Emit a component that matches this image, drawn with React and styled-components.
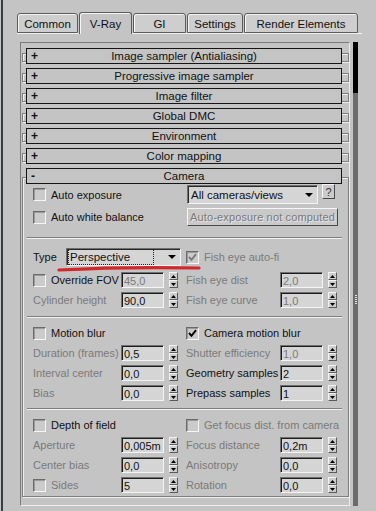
import React from 'react';
import styled, { createGlobalStyle } from 'styled-components';

const BG = '#c4c4c4';
const DIM = '#7a7a7a';
const FIELD = '#d5d5d5';

const GlobalStyle = createGlobalStyle`
  html, body { margin: 0; padding: 0; background: ${BG}; }
  body { font-family: "Liberation Sans", Arial, sans-serif; font-size: 11px; color: #111; }
  * { box-sizing: border-box; }
`;

const Window = styled.div`
  position: relative;
  width: 375px;
  height: 511px;
  margin-left: 1px;
  border-left: 2px solid #363b4a;
  background: ${BG};
  overflow: hidden;
  display: flex;
  flex-direction: column;
`;

const TabBar = styled.div`
  display: flex;
  align-items: flex-end;
  gap: 1px;
  margin: 12px 0 0 14px;
  width: 345px;
  height: 22px;
  border-bottom: 1px solid #f0f0f0;
`;

const Tab = styled.div`
  position: relative;
  z-index: 1;
  width: ${p => p.$w}px;
  height: ${p => (p.$active ? 22 : 20)}px;
  margin-bottom: ${p => (p.$active ? -1 : 0)}px;
  display: flex;
  align-items: center;
  justify-content: center;
  padding-top: 1px;
  background: ${p => (p.$active ? BG : '#cecece')};
  border: 1px solid #5c5c5c;
  border-bottom: ${p => (p.$active ? 'none' : '1px solid #5c5c5c')};
  border-radius: 3px 3px 0 0;
  box-shadow: inset 1px 1px 0 #f6f6f6;
  white-space: nowrap;
  font-size: 11.5px;
`;

const Main = styled.div`
  display: flex;
  margin: 8px 0 0 17px;
`;

const Panel = styled.div`
  width: 330px;
  height: 464px;
  border: 1px solid;
  border-color: #7c7c7c #ececec #ececec #7c7c7c;
  padding: 5px 0 0 1px;
  display: flex;
  flex-direction: column;
  gap: 4px;
`;

const Scrollbar = styled.div`
  margin-left: 3px;
  width: 5px;
  height: 464px;
  display: flex;
  flex-direction: column;
`;

const Thumb = styled.div`
  height: 51px;
  background: #000;
`;

const Track = styled.div`
  flex: 1;
  background: #6b6b6b;
  display: flex;
  align-items: center;
  justify-content: center;
`;

const Grip = styled.div`
  width: 2px;
  height: 10px;
  background: repeating-linear-gradient(#e8e8e8 0 1px, transparent 1px 2px);
`;

const Rollout = styled.div`
  position: relative;
  width: 327px;
  padding: 0 7px 0 4px;
  &::before {
    content: '';
    position: absolute;
    left: 0;
    right: 0;
    top: ${p => (p.$open ? 9 : 5)}px;
    bottom: ${p => (p.$open ? 0 : 2)}px;
    border: 1px solid #7e7e7e;
    box-shadow: inset 1px 1px 0 #efefef, 1px 1px 0 #efefef;
  }
`;

const Header = styled.div`
  position: relative;
  z-index: 1;
  height: 16px;
  border: 1px solid #151515;
  background: ${BG};
  display: grid;
  grid-template-columns: 1fr auto 1fr;
  align-items: center;
  font-size: 11.5px;
`;

const Sign = styled.span`
  justify-self: start;
  padding-left: 4px;
  font-weight: bold;
  font-size: 12px;
  line-height: 12px;
`;

const Body = styled.div`
  position: relative;
  z-index: 1;
  padding-bottom: 1px;
`;

const Section = styled.div`
  display: grid;
  grid-template-columns: 153px 1fr;
  row-gap: 4px;
  padding: ${p => p.$top}px 0 ${p => p.$bottom}px 7px;
`;

const Separator = styled.div`
  height: 2px;
  margin-left: 1px;
  border-top: 1px solid #7e7e7e;
  border-bottom: 1px solid #f2f2f2;
`;

const Cell = styled.div`
  display: flex;
  align-items: center;
  height: ${p => p.$h || 16}px;
  margin-bottom: ${p => p.$mb || 0}px;
`;

const Text = styled.span`
  color: ${p => (p.$dim ? DIM : '#111')};
  white-space: nowrap;
`;

const Box = styled.span`
  flex: none;
  width: 13px;
  height: 13px;
  display: flex;
  align-items: center;
  justify-content: center;
  background: #cbcbcb;
  border: 1px solid;
  border-color: #6a6a6a #f6f6f6 #f6f6f6 #6a6a6a;
  box-shadow: inset 1px 1px 0 #9a9a9a;
`;

const CheckLabel = styled.span`
  display: flex;
  align-items: center;
  gap: 5px;
`;

const FieldLabel = styled.span`
  flex: none;
  width: ${p => p.$w}px;
  display: flex;
  align-items: center;
  overflow: hidden;
`;

const ValueBox = styled.div`
  width: 43px;
  height: 16px;
  display: flex;
  align-items: center;
  padding: 1px 0 0 2px;
  background: ${FIELD};
  border: 1px solid;
  border-color: #707070 #f4f4f4 #f4f4f4 #707070;
  box-shadow: inset 1px 1px 0 #1c1c1c;
  color: ${p => (p.$dim ? DIM : '#111')};
  font-size: 11px;
  white-space: nowrap;
  overflow: hidden;
`;

const SpinBox = styled.div`
  margin-left: 5px;
  width: 9px;
  height: 16px;
  display: flex;
  flex-direction: column;
`;

const SpinHalf = styled.div`
  flex: 1;
  display: flex;
  align-items: center;
  justify-content: center;
  background: #cdcdcd;
  border: 1px solid;
  border-color: #f4f4f4 #5a5a5a #5a5a5a #f4f4f4;
`;

const Combo = styled.div`
  width: ${p => p.$w}px;
  height: ${p => p.$h}px;
  margin-left: ${p => p.$ml || 0}px;
  display: flex;
  align-items: center;
  padding: 0 4px 0 1px;
  background: ${FIELD};
  border: 1px solid;
  border-color: #6e6e6e #f4f4f4 #f4f4f4 #6e6e6e;
  box-shadow: inset 1px 1px 0 #2a2a2a;
  font-size: 11.5px;
`;

const ComboText = styled.span`
  flex: 1;
  height: 100%;
  display: flex;
  align-items: center;
  padding-left: 1px;
  margin-right: ${p => (p.$focus ? 14 : 0)}px;
  border: 1px dotted ${p => (p.$focus ? '#222' : 'transparent')};
  white-space: nowrap;
`;

const HelpButton = styled.div`
  width: 13px;
  height: 15px;
  margin: -1px 0 0 4px;
  align-self: flex-start;
  display: flex;
  align-items: center;
  justify-content: center;
  background: #cbcbcb;
  border: 1px solid;
  border-color: #f6f6f6 #4a4a4a #4a4a4a #f6f6f6;
  color: #333;
  font-size: 11px;
`;

const FlatButton = styled.div`
  width: 151px;
  height: 18px;
  margin-left: 1px;
  display: flex;
  align-items: center;
  justify-content: center;
  background: #c9c9c9;
  border: 1px solid;
  border-color: #f6f6f6 #4a4a4a #4a4a4a #f6f6f6;
  color: ${DIM};
  text-shadow: 1px 1px 0 #e6e6e6;
  font-size: 11px;
  letter-spacing: 0.15px;
  white-space: nowrap;
`;

const Annotation = styled.svg`
  position: absolute;
  left: 0;
  top: 0;
  pointer-events: none;
`;

const Tri = ({ up }) => (
  <svg width="5" height="3" viewBox="0 0 5 3">
    <path d={up ? 'M0 3 L2.5 0 L5 3 Z' : 'M0 0 L5 0 L2.5 3 Z'} fill="#000" />
  </svg>
);

const Arrow = () => (
  <svg width="8" height="4" viewBox="0 0 8 4">
    <path d="M0 0 L8 0 L4 4 Z" fill="#000" />
  </svg>
);

const Spinner = () => (
  <SpinBox>
    <SpinHalf><Tri up /></SpinHalf>
    <SpinHalf><Tri /></SpinHalf>
  </SpinBox>
);

const CheckBox = ({ checked, disabled }) => (
  <Box>
    {checked && (
      <svg width="9" height="9" viewBox="0 0 9 9">
        <path d="M1 4 L3.5 6.8 L8 1.2" stroke={disabled ? DIM : '#000'} strokeWidth="1.9" fill="none" />
      </svg>
    )}
  </Box>
);

const Check = ({ label, checked, disabled }) => (
  <CheckLabel>
    <CheckBox checked={checked} disabled={disabled} />
    <Text $dim={disabled}>{label}</Text>
  </CheckLabel>
);

const Field = ({ label, w = 88, dim, value, valueDim, check, checkDisabled }) => (
  <Cell>
    <FieldLabel $w={w}>
      {check ? <Check label={label} disabled={checkDisabled} /> : <Text $dim={dim}>{label}</Text>}
    </FieldLabel>
    <ValueBox $dim={valueDim}>{value}</ValueBox>
    <Spinner />
  </Cell>
);

const CollapsedRollout = ({ title }) => (
  <Rollout>
    <Header>
      <Sign>+</Sign>
      <span>{title}</span>
      <span />
    </Header>
  </Rollout>
);

const tabs = [
  { t: 'Common', w: 61 },
  { t: 'V-Ray', w: 53, active: true },
  { t: 'GI', w: 53 },
  { t: 'Settings', w: 56 },
  { t: 'Render Elements', w: 114 },
];

const collapsed = [
  'Image sampler (Antialiasing)',
  'Progressive image sampler',
  'Image filter',
  'Global DMC',
  'Environment',
  'Color mapping',
];

export default function App() {
  return (
    <>
      <GlobalStyle />
      <Window>
        <TabBar>
          {tabs.map(tab => (
            <Tab key={tab.t} $w={tab.w} $active={tab.active}>{tab.t}</Tab>
          ))}
        </TabBar>
        <Main>
          <Panel>
            {collapsed.map(t => <CollapsedRollout key={t} title={t} />)}
            <Rollout $open>
              <Header>
                <Sign>-</Sign>
                <span>Camera</span>
                <span />
              </Header>
              <Body>
                <Section $top={1} $bottom={11}>
                  <Cell $h={19}><Check label="Auto exposure" /></Cell>
                  <Cell $h={19}>
                    <Combo $w={131} $h={19} $ml={1}>
                      <ComboText>All cameras/views</ComboText>
                      <Arrow />
                    </Combo>
                    <HelpButton>?</HelpButton>
                  </Cell>
                  <Cell $h={18}><Check label="Auto white balance" /></Cell>
                  <Cell $h={18}><FlatButton>Auto-exposure not computed</FlatButton></Cell>
                </Section>
                <Separator />
                <Section $top={9} $bottom={8}>
                  <Cell $h={18} $mb={2}>
                    <FieldLabel $w={33}><Text>Type</Text></FieldLabel>
                    <Combo $w={115} $h={18}>
                      <ComboText $focus>Perspective</ComboText>
                      <Arrow />
                    </Combo>
                  </Cell>
                  <Cell $h={18} $mb={2}><Check label="Fish eye auto-fi" checked disabled /></Cell>
                  <Field check label="Override FOV" value="45,0" valueDim />
                  <Field w={94} dim label="Fish eye dist" value="2,0" valueDim />
                  <Field dim label="Cylinder height" value="90,0" />
                  <Field w={94} dim label="Fish eye curve" value="1,0" valueDim />
                </Section>
                <Separator />
                <Section $top={7} $bottom={7}>
                  <Cell><Check label="Motion blur" /></Cell>
                  <Cell><Check label="Camera motion blur" checked /></Cell>
                  <Field dim label="Duration (frames)" value="0,5" />
                  <Field w={94} dim label="Shutter efficiency" value="1,0" valueDim />
                  <Field dim label="Interval center" value="0,0" />
                  <Field w={94} label="Geometry samples" value="2" />
                  <Field dim label="Bias" value="0,0" />
                  <Field w={94} label="Prepass samples" value="1" />
                </Section>
                <Separator />
                <Section $top={7} $bottom={3}>
                  <Cell><Check label="Depth of field" /></Cell>
                  <Cell><Check label="Get focus dist. from camera" disabled /></Cell>
                  <Field dim label="Aperture" value="0,005m" />
                  <Field w={94} dim label="Focus distance" value="0,2m" />
                  <Field dim label="Center bias" value="0,0" />
                  <Field w={94} dim label="Anisotropy" value="0,0" />
                  <Field check checkDisabled label="Sides" value="5" />
                  <Field w={94} dim label="Rotation" value="0,0" />
                </Section>
              </Body>
            </Rollout>
          </Panel>
          <Scrollbar>
            <Thumb />
            <Track><Grip /></Track>
          </Scrollbar>
        </Main>
        <Annotation width="376" height="511" viewBox="0 0 376 511">
          <path d="M56 270 Q 120 266.5 196 268" stroke="#d3272c" strokeWidth="3.2" strokeLinecap="round" fill="none" />
        </Annotation>
      </Window>
    </>
  );
}
